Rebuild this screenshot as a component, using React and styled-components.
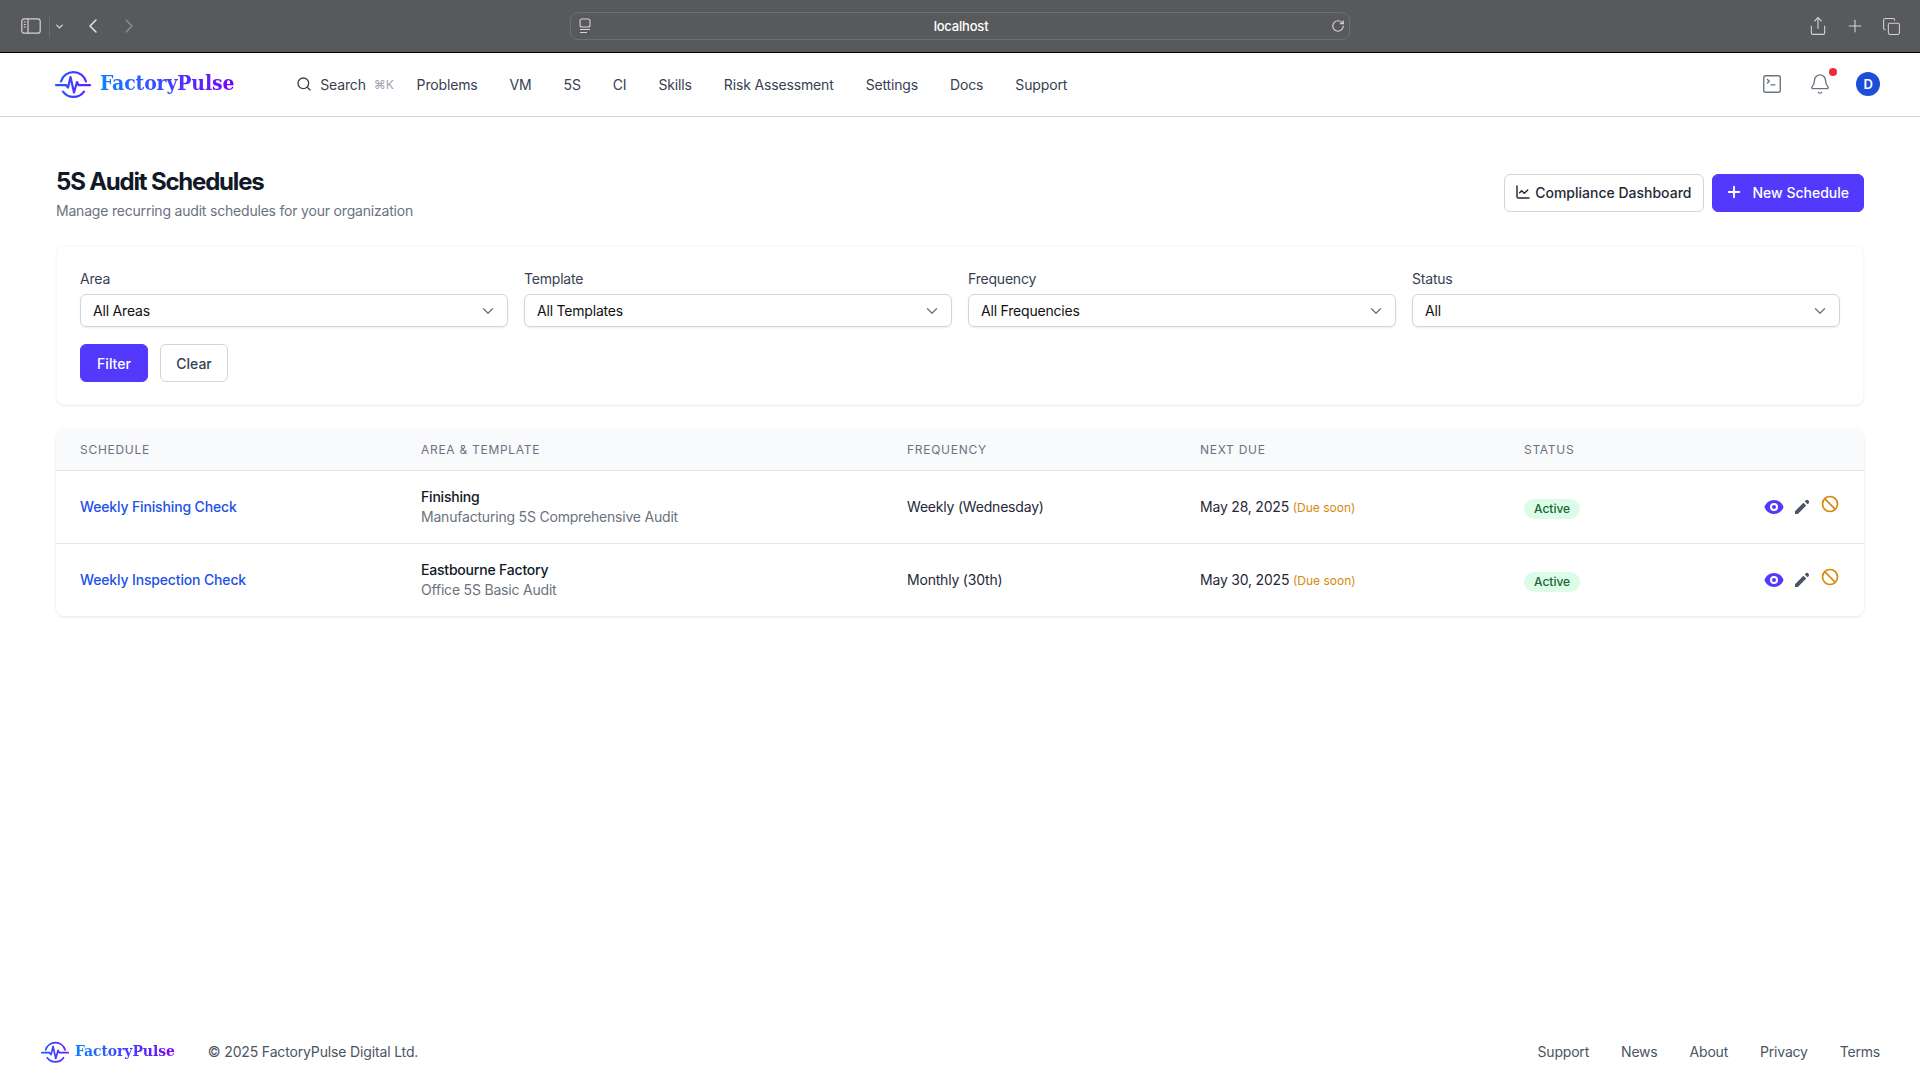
import styled, { createGlobalStyle } from 'styled-components'
import { HiEye, HiPencil, HiOutlineBan } from 'react-icons/hi'
import { ChevronDown, ChevronLeft, ChevronRight, Plus, Search, Bell, SquareTerminal, ChartLine, RotateCw, Share, Copy } from 'lucide-react'

const GlobalStyle = createGlobalStyle`
	* { box-sizing: border-box; }
	body {
		margin: 0;
		background: #fff;
		font-family: Inter, "Liberation Sans", sans-serif;
		font-size: 14px;
		letter-spacing: -0.2px;
		color: #111827;
	}
`

const schedules = [
	{ name: 'Weekly Finishing Check', area: 'Finishing', template: 'Manufacturing 5S Comprehensive Audit', frequency: 'Weekly (Wednesday)', due: 'May 28, 2025' },
	{ name: 'Weekly Inspection Check', area: 'Eastbourne Factory', template: 'Office 5S Basic Audit', frequency: 'Monthly (30th)', due: 'May 30, 2025' },
]

const filters = [
	{ label: 'Area', value: 'All Areas' },
	{ label: 'Template', value: 'All Templates' },
	{ label: 'Frequency', value: 'All Frequencies' },
	{ label: 'Status', value: 'All' },
]

const navItems = ['Problems', 'VM', '5S', 'CI', 'Skills', 'Risk Assessment', 'Settings', 'Docs', 'Support']
const footerLinks = ['Support', 'News', 'About', 'Privacy', 'Terms']

const LogoMark = ({ id, size }) => (
	<svg width={size} height={size * 0.78} viewBox="0 0 36 28" fill="none">
		<defs>
			<linearGradient id={id} x1="0" y1="0" x2="36" y2="0" gradientUnits="userSpaceOnUse">
				<stop offset="0" stopColor="#1a5cff" />
				<stop offset="1" stopColor="#6a1bff" />
			</linearGradient>
		</defs>
		<g stroke={`url(#${id})`} strokeWidth="2.200" strokeLinecap="round" strokeLinejoin="round">
			<path d="M6 11.500A13 13 0 0 1 31 11.500" />
			<path d="M8 21.500A13 13 0 0 0 29 21.500" />
			<path d="M1 15H11L13 17.500L15.500 7L19 22.500L22 12L23.500 15H35" />
		</g>
	</svg>
)

const Logo = ({ small }) => (
	<LogoLink $small={small}>
		<LogoMark id={small ? 'logo-footer' : 'logo-header'} size={small ? 28 : 36} />
		<LogoText $small={small}>FactoryPulse</LogoText>
	</LogoLink>
)

export default function App() {
	return (
		<Page>
			<GlobalStyle />
			<BrowserBar>
				<BarGroup>
					<svg width="20" height="16" viewBox="0 0 20 16" fill="none" stroke="#d4d4d5" strokeWidth="1.200">
						<rect x="0.8" y="0.8" width="18.400" height="14.400" rx="2.500" />
						<path d="M7 1v14M2.800 4h2M2.800 6.500h2M2.800 9h2" />
					</svg>
					<BarDivider />
					<ChevronDown size={11} strokeWidth={3} color="#d4d4d5" />
				</BarGroup>
				<BarArrows>
					<ChevronLeft size={24} strokeWidth={1.500} color="#e5e5e5" />
					<ChevronRight size={24} strokeWidth={1.500} color="#8a8b8d" />
				</BarArrows>
				<AddressField>
					<svg width="12" height="16" viewBox="0 0 12 16" fill="none" stroke="#d4d4d5" strokeWidth="1.100">
						<rect x="1" y="1" width="10" height="8" rx="2" />
						<path d="M1 11.500h10M1 14.500h7" />
					</svg>
					<AddressText>localhost</AddressText>
					<RotateCw size={14} color="#d4d4d5" />
				</AddressField>
				<BarActions>
					<Share size={20} strokeWidth={1.300} color="#d4d4d5" />
					<Plus size={20} strokeWidth={1.300} color="#d4d4d5" />
					<Copy size={19} strokeWidth={1.300} color="#d4d4d5" />
				</BarActions>
			</BrowserBar>

			<Header>
				<Logo />
				<Nav>
					<SearchItem>
						<Search size={16} color="#374151" />
						<span>Search</span>
						<Kbd>⌘K</Kbd>
					</SearchItem>
					{navItems.map(item => (
						<NavItem key={item}>{item}</NavItem>
					))}
				</Nav>
				<HeaderIcons>
					<SquareTerminal size={22} strokeWidth={1.500} color="#6b7280" />
					<BellWrap>
						<Bell size={22} strokeWidth={1.500} color="#6b7280" />
						<BellDot />
					</BellWrap>
					<Avatar>D</Avatar>
				</HeaderIcons>
			</Header>

			<Main>
				<TitleRow>
					<div>
						<Title>5S Audit Schedules</Title>
						<Subtitle>Manage recurring audit schedules for your organization</Subtitle>
					</div>
					<TitleActions>
						<Button>
							<ChartLine size={16} strokeWidth={2.200} />
							Compliance Dashboard
						</Button>
						<Button $primary $wide>
							<Plus size={18} strokeWidth={2.500} />
							New Schedule
						</Button>
					</TitleActions>
				</TitleRow>

				<FilterCard>
					<FilterGrid>
						{filters.map(filter => (
							<Field key={filter.label}>
								<FieldLabel>{filter.label}</FieldLabel>
								<Select>
									{filter.value}
									<ChevronDown size={18} strokeWidth={1.700} color="#6b7280" />
								</Select>
							</Field>
						))}
					</FilterGrid>
					<FilterActions>
						<SmallButton $primary>Filter</SmallButton>
						<SmallButton>Clear</SmallButton>
					</FilterActions>
				</FilterCard>

				<TableCard>
					<Table>
						<colgroup>
							<col width="341" />
							<col width="486" />
							<col width="293" />
							<col width="324" />
							<col width="364" />
						</colgroup>
						<thead>
							<tr>
								<Th>Schedule</Th>
								<Th>Area &amp; Template</Th>
								<Th>Frequency</Th>
								<Th>Next Due</Th>
								<Th>Status</Th>
							</tr>
						</thead>
						<tbody>
							{schedules.map(row => (
								<Row key={row.name}>
									<Td><ScheduleLink>{row.name}</ScheduleLink></Td>
									<Td>
										<AreaName>{row.area}</AreaName>
										<TemplateName>{row.template}</TemplateName>
									</Td>
									<Td>{row.frequency}</Td>
									<Td $low>{row.due} <DueSoon>(Due soon)</DueSoon></Td>
									<Td>
										<StatusCell>
											<Badge>Active</Badge>
											<RowActions>
												<HiEye size={20} color="#5239fb" />
												<HiPencil size={20} color="#4b5563" />
												<BanIcon size={20} color="#d58a0a" />
											</RowActions>
										</StatusCell>
									</Td>
								</Row>
							))}
						</tbody>
					</Table>
				</TableCard>
			</Main>

			<Footer>
				<FooterLeft>
					<Logo small />
					<Copyright>© 2025 FactoryPulse Digital Ltd.</Copyright>
				</FooterLeft>
				<FooterLinks>
					{footerLinks.map(link => (
						<FooterLink key={link}>{link}</FooterLink>
					))}
				</FooterLinks>
			</Footer>
		</Page>
	)
}

const Page = styled.div`
	min-height: 100vh;
	display: flex;
	flex-direction: column;
`

const BrowserBar = styled.div`
	height: 53px;
	flex-shrink: 0;
	background: #58595b;
	border-bottom: 1px solid #000;
	display: flex;
	align-items: center;
	padding: 0 19px 0 21px;
`

const BarGroup = styled.div`
	display: flex;
	align-items: center;
	gap: 8px;
	width: 46px;
`

const BarDivider = styled.div`
	width: 1px;
	height: 22px;
	margin-right: -4px;
	background: #6b6c6e;
`

const BarArrows = styled.div`
	display: flex;
	align-items: center;
	gap: 12px;
	margin-left: 14px;
`

const AddressField = styled.div`
	margin-left: 429px;
	width: 780px;
	height: 28px;
	border: 1px solid #6d6e70;
	border-radius: 8px;
	display: flex;
	align-items: center;
	justify-content: space-between;
	padding: 0 4px 0 8px;
`

const AddressText = styled.span`
	color: #fff;
	font-size: 13px;
	font-weight: 500;
`

const BarActions = styled.div`
	margin-left: auto;
	display: flex;
	align-items: center;
	gap: 17px;
`

const Header = styled.header`
	height: 64px;
	flex-shrink: 0;
	border-bottom: 1px solid #d1d5db;
	display: flex;
	align-items: center;
	padding: 0 40px 1px 55px;
`

const LogoLink = styled.div`
	display: flex;
	align-items: center;
	gap: ${({ $small }) => ($small ? '6px' : '9px')};
`

const LogoText = styled.span`
	font-family: "DejaVu Serif Condensed", "DejaVu Serif", serif;
	font-weight: 700;
	font-size: ${({ $small }) => ($small ? '15.500px' : '21px')};
	letter-spacing: ${({ $small }) => ($small ? '-0.05px' : '-0.150px')};
	background: linear-gradient(90deg, #0a84ff, #7a00ff);
	-webkit-background-clip: text;
	background-clip: text;
	color: transparent;
	padding-bottom: 3px;
`

const Nav = styled.nav`
	display: flex;
	align-items: center;
	gap: 32px;
	margin-left: 62px;
	letter-spacing: -0.15px;
	color: #374151;
`

const NavItem = styled.a`
	color: #374151;
`

const SearchItem = styled.div`
	display: flex;
	align-items: center;
	gap: 8px;
	margin-right: -9px;
`

const Kbd = styled.span`
	font-size: 12px;
	color: #9ca3af;
`

const HeaderIcons = styled.div`
	margin-left: auto;
	display: flex;
	align-items: center;
	gap: 26px;
`

const BellWrap = styled.div`
	position: relative;
	display: flex;
	margin-right: -1px;
`

const BellDot = styled.span`
	position: absolute;
	top: -5px;
	right: -6px;
	width: 8px;
	height: 8px;
	border-radius: 50%;
	background: #ef2b3c;
`

const Avatar = styled.div`
	width: 24px;
	height: 24px;
	border-radius: 50%;
	background: #1d4ed8;
	color: #fff;
	font-size: 13px;
	font-weight: 600;
	display: flex;
	align-items: center;
	justify-content: center;
`

const Main = styled.main`
	flex: 1;
	padding: 49px 56px 0;
`

const TitleRow = styled.div`
	display: flex;
	align-items: flex-start;
	justify-content: space-between;
	margin-bottom: 24px;
`

const Title = styled.h1`
	margin: 0;
	font-size: 24px;
	line-height: 32px;
	font-weight: 700;
	letter-spacing: -1.200px;
	color: #111827;
`

const Subtitle = styled.p`
	margin: 3px 0 0;
	line-height: 20px;
	color: #6b7280;
`

const TitleActions = styled.div`
	display: flex;
	gap: 8px;
	margin-top: 8px;
`

const Button = styled.button`
	height: 38px;
	display: flex;
	align-items: center;
	gap: ${({ $wide }) => ($wide ? '9px' : '4px')};
	padding: 0 ${({ $wide }) => ($wide ? '14px' : '12px')} 2px ${({ $wide }) => ($wide ? '12px' : '10px')};
	border-radius: 6px;
	border: 1px solid ${({ $primary }) => ($primary ? '#5239fb' : '#d1d5db')};
	background: ${({ $primary }) => ($primary ? '#5239fb' : '#fff')};
	color: ${({ $primary }) => ($primary ? '#fff' : '#1f2937')};
	font: 500 14px Inter, sans-serif;
`

const FilterCard = styled.section`
	background: #fff;
	border-radius: 8px;
	box-shadow: 0 1px 2px rgba(0, 0, 0, 0.07);
	border: 1px solid #f8f8f9;
	padding: 24px 23px 22px;
`

const FilterGrid = styled.div`
	display: grid;
	grid-template-columns: repeat(4, 1fr);
	gap: 16px;
`

const Field = styled.div`
	display: flex;
	flex-direction: column;
	gap: 4px;
`

const FieldLabel = styled.label`
	line-height: 20px;
	margin-top: -1px;
	margin-bottom: 1px;
	color: #374151;
`

const Select = styled.div`
	height: 33px;
	display: flex;
	align-items: center;
	justify-content: space-between;
	padding: 0 10px 0 12px;
	border: 1px solid #d1d5db;
	border-radius: 6px;
	box-shadow: 0 1px 2px rgba(0, 0, 0, 0.08);
	color: #111;
`

const FilterActions = styled.div`
	display: flex;
	gap: 12px;
	margin-top: 17px;
`

const SmallButton = styled.button`
	height: 38px;
	width: 68px;
	border-radius: 6px;
	border: 1px solid ${({ $primary }) => ($primary ? '#5239fb' : '#d1d5db')};
	background: ${({ $primary }) => ($primary ? '#5239fb' : '#fff')};
	color: ${({ $primary }) => ($primary ? '#fff' : '#374151')};
	font: 500 14px Inter, sans-serif;
`

const TableCard = styled.section`
	margin-top: 24px;
	border-radius: 8px;
	overflow: hidden;
	box-shadow: 0 1px 3px rgba(0, 0, 0, 0.1);
`

const Table = styled.table`
	width: 100%;
	border-collapse: collapse;
	table-layout: fixed;
`

const Th = styled.th`
	height: 41px;
	padding: 0 24px;
	text-align: left;
	background: #f9fafb;
	border-bottom: 1px solid #e5e7eb;
	font-size: 12px;
	font-weight: 400;
	letter-spacing: 0.06em;
	text-transform: uppercase;
	color: #6b7280;
`

const Row = styled.tr`
	height: 73px;
	& + & {
		border-top: 1px solid #e5e7eb;
	}
`

const Td = styled.td`
	padding: ${({ $low }) => ($low ? '2px' : '0')} 24px 0;
	line-height: 20px;
	color: #1f2937;
`

const ScheduleLink = styled.a`
	color: #2251e8;
	font-weight: 500;
	letter-spacing: -0.15px;
`

const AreaName = styled.div`
	font-weight: 500;
	color: #111827;
`

const TemplateName = styled.div`
	color: #6b7280;
`

const DueSoon = styled.span`
	font-size: 12px;
	letter-spacing: 0;
	color: #d58a0a;
`

const StatusCell = styled.div`
	display: flex;
	align-items: center;
	justify-content: space-between;
`

const Badge = styled.span`
	height: 20px;
	padding: 0 10px;
	border-radius: 10px;
	background: #dcfce7;
	color: #166534;
	font-size: 12px;
	font-weight: 500;
	letter-spacing: 0;
	line-height: 20px;
	margin-top: 4px;
`

const RowActions = styled.div`
	display: flex;
	align-items: center;
	gap: 8px;
`

const BanIcon = styled(HiOutlineBan)`
	transform: translateY(-3px);
`

const Footer = styled.footer`
	height: 56px;
	flex-shrink: 0;
	display: flex;
	align-items: center;
	justify-content: space-between;
	padding: 0 40px 0 41px;
`

const FooterLeft = styled.div`
	display: flex;
	align-items: center;
	gap: 33px;
`

const Copyright = styled.span`
	color: #4b5563;
	letter-spacing: -0.15px;
	padding-bottom: 1px;
`

const FooterLinks = styled.div`
	display: flex;
	gap: 32px;
`

const FooterLink = styled.a`
	color: #4b5563;
	padding-bottom: 1px;
`
